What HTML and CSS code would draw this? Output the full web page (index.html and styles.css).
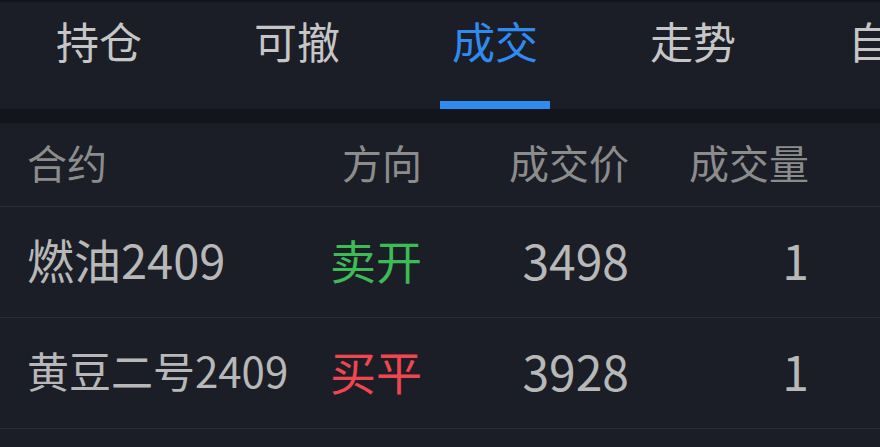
FILE: index.html
```html
<!DOCTYPE html>
<html lang="zh-CN">
<head>
<meta charset="utf-8">
<link rel="stylesheet" href="styles.css">
</head>
<body>
<div class="page">
  <div class="topstrip"></div>
  <nav class="tabs">
    <div class="tab">持仓</div>
    <div class="tab">可撤</div>
    <div class="tab active">成交</div>
    <div class="tab">走势</div>
    <div class="tab">自选</div>
  </nav>
  <div class="sep"></div>
  <div class="table">
    <div class="row head">
      <div class="c1">合约</div>
      <div class="c2">方向</div>
      <div class="c3">成交价</div>
      <div class="c4">成交量</div>
      <div class="c5">时间</div>
    </div>
    <div class="row">
      <div class="c1">燃油2409</div>
      <div class="c2 sell">卖开</div>
      <div class="c3 num">3498</div>
      <div class="c4 num">1</div>
      <div class="c5 num">1</div>
    </div>
    <div class="row">
      <div class="c1 long">黄豆二号2409</div>
      <div class="c2 buy">买平</div>
      <div class="c3 num">3928</div>
      <div class="c4 num">1</div>
      <div class="c5 num"></div>
    </div>
  </div>
</div>
</body>
</html>
```
FILE: styles.css
```css
html, body {
  margin: 0;
  padding: 0;
  background: #1b1e27;
  overflow: hidden;
}
.page {
  width: 880px;
  height: 447px;
  overflow: hidden;
  font-family: "Noto Sans CJK SC", "Noto Sans", sans-serif;
  background: #1b1e27;
}
.topstrip {
  height: 2px;
  background: #12151c;
}
.tabs {
  display: flex;
  height: 107px;
  white-space: nowrap;
}
.tab {
  flex: 0 0 198px;
  position: relative;
  text-align: center;
  font-size: 43px;
  line-height: 1;
  padding-top: 17px;
  box-sizing: border-box;
  color: #c6c6c6;
}
.tab.active {
  color: #2f8bef;
}
.tab.active::after {
  content: "";
  position: absolute;
  left: 44px;
  width: 110px;
  bottom: 0;
  height: 8px;
  background: #2f8bef;
}
.sep {
  height: 14px;
  background: #12151c;
}
.row {
  display: grid;
  grid-template-columns: 232px 163px 207px 180px 200px;
  box-sizing: border-box;
  padding-left: 27px;
  padding-bottom: 7px;
  height: 111px;
  align-items: center;
  border-bottom: 1px solid #2a2d36;
  font-size: 47px;
  line-height: 1;
  color: #b8b8b8;
  white-space: nowrap;
}
.row.head {
  height: 84px;
  padding-bottom: 6px;
  font-size: 40px;
  color: #8c8c8c;
}
.c1.long {
  font-size: 42px;
}
.c2 {
  font-size: 46px;
}
.head .c2 {
  font-size: 40px;
}
.num {
  font-size: 48px;
}
.c2, .c3, .c4 {
  text-align: right;
}
.c5 {
  padding-left: 70px;
  overflow: hidden;
}
.head .c5 {
  padding-left: 100px;
}
.sell { color: #3dbb55; }
.buy { color: #f0464f; }
```
